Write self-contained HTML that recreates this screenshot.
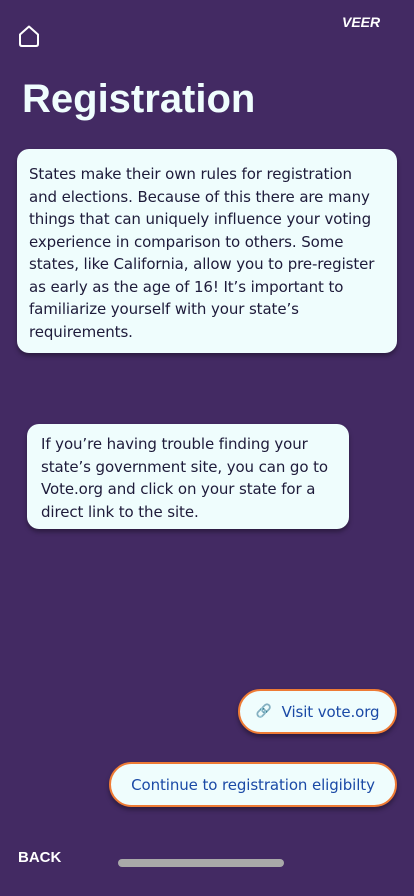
<!DOCTYPE html>
<html><head><style>
body{margin:0;width:414px;height:896px;background:#432a63;font-family:"Liberation Sans",sans-serif;position:relative;overflow:hidden}
.a{position:absolute}
.card{background:#effdfd;border-radius:12px;color:#1e1b3a;font-family:"DejaVu Sans",sans-serif;font-size:15px;letter-spacing:-0.1px;line-height:22.5px;box-shadow:0 3px 5px rgba(0,0,0,.35);box-sizing:border-box;white-space:nowrap}
.btn{background:#effdfd;border:2px solid #ee7b35;border-radius:23px;color:#1b4aa6;font-family:"DejaVu Sans",sans-serif;font-size:15px;letter-spacing:-0.1px;box-sizing:border-box;display:flex;align-items:center;justify-content:center;box-shadow:0 3px 5px rgba(0,0,0,.35);white-space:nowrap}
</style></head><body>
<svg class="a" style="left:17px;top:24px" width="24" height="24" viewBox="0 0 24 24"><path d="M3 20V10.5L12 2.5L21 10.5V20Q21 22 19 22H5Q3 22 3 20Z" fill="none" stroke="#fff" stroke-width="2" stroke-linejoin="round"/></svg>
<div class="a" style="left:342px;top:14px;color:#fff;font-weight:bold;font-style:italic;font-size:14px">VEER</div>
<div class="a" style="left:22px;top:77px;color:#effdfd;font-weight:bold;font-size:40px">Registration</div>
<div class="a card" style="left:17px;top:149px;width:380px;height:204px;padding:14px 12px">States make their own rules for registration<br>and elections. Because of this there are many<br>things that can uniquely influence your voting<br>experience in comparison to others. Some<br>states, like California, allow you to pre-register<br>as early as the age of 16! It’s important to<br>familiarize yourself with your state’s<br>requirements.</div>
<div class="a card" style="left:27px;top:424px;width:322px;height:105px;padding:9px 14px">If you’re having trouble finding your<br>state’s government site, you can go to<br>Vote.org and click on your state for a<br>direct link to the site.</div>
<div class="a btn" style="left:238px;top:689px;width:159px;height:45px"><span style="font-size:13px;color:#777;margin-right:10px">🔗</span>Visit vote.org</div>
<div class="a btn" style="left:109px;top:762px;width:288px;height:45px">Continue to registration eligibilty</div>
<div class="a" style="left:18px;top:849px;color:#fff;font-weight:bold;font-size:15px">BACK</div>
<div class="a" style="left:118px;top:859px;width:166px;height:8px;border-radius:4px;background:#a9a9a9"></div>
</body></html>
